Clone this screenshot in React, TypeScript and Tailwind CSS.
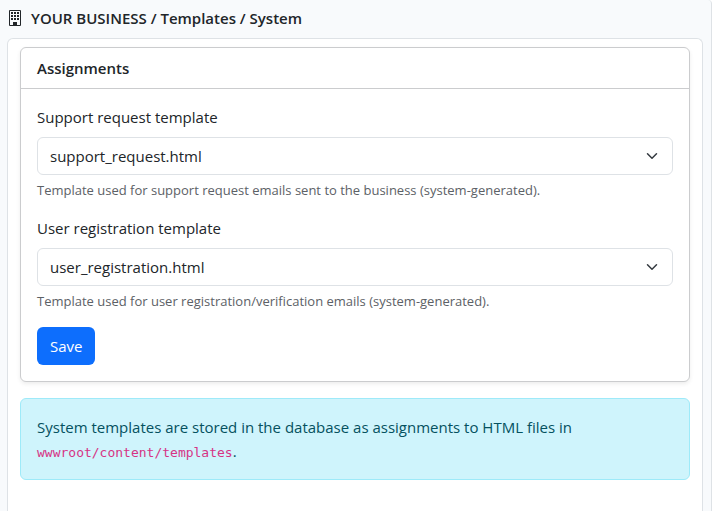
import type { ReactNode } from "react";

type TemplateFieldProps = {
  id: string;
  label: string;
  value: string;
  help: ReactNode;
};

function BuildingIcon() {
  return (
    <svg viewBox="0 0 16 16" aria-hidden="true" className="size-4 shrink-0" fill="currentColor">
      <path
        fillRule="evenodd"
        d="M3 0h10a1 1 0 0 1 1 1v14a1 1 0 0 1-1 1H3a1 1 0 0 1-1-1V1a1 1 0 0 1 1-1Zm0 1v14h3v-3h4v3h3V1H3Z"
      />
      <path d="M4 2h2v2H4zM7 2h2v2H7zM10 2h2v2h-2zM4 5h2v2H4zM7 5h2v2H7zM10 5h2v2h-2zM4 8h2v2H4zM7 8h2v2H7zM10 8h2v2h-2zM6 12h4v4H6z" />
    </svg>
  );
}

function TemplateField({ id, label, value, help }: TemplateFieldProps) {
  return (
    <div className="mb-3.5">
      <label htmlFor={id} className="mb-2 block leading-6">
        {label}
      </label>
      <div className="grid items-center">
        <select
          id={id}
          defaultValue={value}
          aria-describedby={`${id}-help`}
          className="col-start-1 row-start-1 h-[38px] w-full appearance-none rounded-md border border-[#dee2e6] bg-white pr-9 pl-3 leading-6"
        >
          <option value={value}>{value}</option>
        </select>
        <svg
          viewBox="0 0 16 16"
          aria-hidden="true"
          className="pointer-events-none col-start-1 row-start-1 mr-[15px] size-3 justify-self-end text-[#343a40]"
        >
          <path
            d="m2 5 6 6 6-6"
            fill="none"
            stroke="currentColor"
            strokeLinecap="round"
            strokeLinejoin="round"
            strokeWidth="2"
          />
        </svg>
      </div>
      <p id={`${id}-help`} className="mt-1 text-[13px] leading-[23px] text-[#5c6166]">
        {help}
      </p>
    </div>
  );
}

export default function App() {
  return (
    <div className="flex min-h-screen flex-col rounded-tr border-r border-[#dee2e6] bg-[#f8fafc] pr-2 pl-[7px] font-['Open_Sans','Noto_Sans',sans-serif] text-[15px] text-[#212529]">
      <header className="flex h-[38px] items-center gap-2 pb-0.5">
        <BuildingIcon />
        <h1 className="font-semibold">YOUR BUSINESS / Templates / System</h1>
      </header>

      <main className="flex-1 rounded-t-md border border-b-0 border-[#dee2e6] bg-white px-3 py-2">
        <section className="rounded-md border border-[#cbccce] bg-white shadow-[0_2px_4px_rgba(0,0,0,0.075)]">
          <h2 className="border-b border-[#cbccce] px-4 py-2 leading-6 font-semibold">Assignments</h2>
          <form className="p-4" onSubmit={(event) => event.preventDefault()}>
            <TemplateField
              id="support-template"
              label="Support request template"
              value="support_request.html"
              help="Template used for support request emails sent to the business (system-generated)."
            />
            <TemplateField
              id="registration-template"
              label="User registration template"
              value="user_registration.html"
              help="Template used for user registration/verification emails (system-generated)."
            />
            <button type="submit" className="h-[38px] rounded-md bg-[#0d6efd] px-[13px] leading-6 text-white">
              Save
            </button>
          </form>
        </section>

        <p className="mt-4 rounded-md border border-[#9eeaf9] bg-[#cff4fc] p-4 leading-6 text-[#055160]">
          System templates are stored in the database as assignments to HTML files in{" "}
          <code className="font-['DejaVu_Sans_Mono',monospace] text-[13px] leading-none text-[#d63384]">
            wwwroot/content/templates
          </code>
          .
        </p>
      </main>
    </div>
  );
}
